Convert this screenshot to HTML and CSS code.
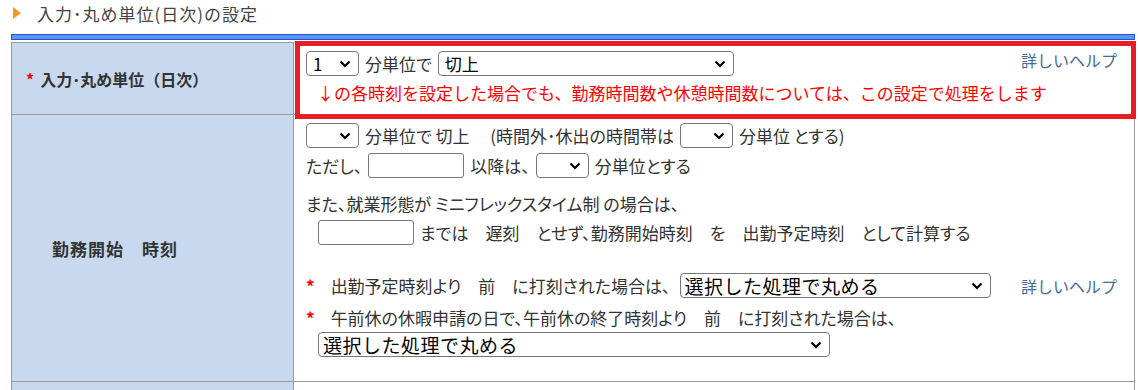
FILE: index.html
```html
<!DOCTYPE html>
<html lang="ja">
<head>
    <meta charset="UTF-8">
    <title>入力･丸め単位(日次)の設定</title>
    <link rel="stylesheet" href="styles.css">
</head>
<body>
    <div class="section-title">
        <span class="arrow"></span>
        <span>入力･丸め単位(日次)の設定</span>
    </div>
    <div class="section-bar"></div>

    <table class="setting-table">
        <tr class="row-unit">
            <th class="label"><span class="req">*</span>入力･丸め単位（日次）</th>
            <td class="body highlight">
                <a class="help" href="#">詳しいヘルプ</a>
                <div class="line">
                    <select class="sel-small"><option>1</option></select>
                    <span class="txt">分単位で</span>
                    <select class="sel-round"><option>切上</option></select>
                </div>
                <div class="notice">↓の各時刻を設定した場合でも、勤務時間数や休憩時間数については、この設定で処理をします</div>
            </td>
        </tr>
        <tr class="row-start">
            <th class="label"><span class="indent">勤務開始　時刻</span></th>
            <td class="body">
                <div class="line">
                    <select class="sel-small"><option></option></select>
                    <span class="txt">分単位で 切上　 (時間外･休出の時間帯は</span>
                    <select class="sel-small"><option></option></select>
                    <span class="txt">分単位 とする)</span>
                </div>
                <div class="line line-gap">
                    <span class="txt">ただし、</span>
                    <input class="time-input" type="text">
                    <span class="txt">以降は、</span>
                    <select class="sel-small"><option></option></select>
                    <span class="txt">分単位とする</span>
                </div>
                <div class="text-line flex-note">また、就業形態が ミニフレックスタイム制 の場合は、</div>
                <div class="line line-indent">
                    <input class="time-input" type="text">
                    <span class="txt">までは　遅刻　とせず、勤務開始時刻　を　出勤予定時刻　として計算する</span>
                </div>
                <div class="line line-early">
                    <span class="req">*</span>
                    <span class="txt">出勤予定時刻より　前　に打刻された場合は、</span>
                    <select class="sel-proc"><option>選択した処理で丸める</option></select>
                    <a class="help help-inline" href="#">詳しいヘルプ</a>
                </div>
                <div class="text-line am-note"><span class="req">*</span>午前休の休暇申請の日で、午前休の終了時刻より　前　に打刻された場合は、</div>
                <div class="line line-indent line-last">
                    <select class="sel-proc sel-wide"><option>選択した処理で丸める</option></select>
                </div>
            </td>
        </tr>
        <tr class="row-next">
            <th class="label"></th>
            <td class="body"></td>
        </tr>
    </table>
</body>
</html>
```

FILE: styles.css
```css
body {
    margin: 0;
    font-family: "Noto Sans CJK JP", "Noto Sans", sans-serif;
    font-size: 17px;
    color: #333;
    background-color: #fff;
}
.section-title {
    display: flex;
    align-items: center;
    height: 26px;
    padding-left: 13px;
    font-size: 17px;
    letter-spacing: 1px;
    color: #444;
}
.arrow {
    width: 0;
    height: 0;
    border-top: 6px solid transparent;
    border-bottom: 6px solid transparent;
    border-left: 8px solid #f39a1e;
    margin-right: 16px;
}
.section-bar {
    margin: 8px 3px 0 11px;
    height: 4px;
    background-color: #5e93f2;
    border: 1px solid #1b59d4;
}
.setting-table {
    margin: 2px 0 0 11px;
    width: 1124px;
    border-collapse: collapse;
}
.label {
    width: 267px;
    padding: 0 0 0 14px;
    background-color: #c8d9ef;
    border: 1px solid #9a9a9a;
    text-align: left;
    font-weight: bold;
    font-size: 16px;
    color: #333;
    vertical-align: middle;
}
.label .req {
    margin-right: 6px;
}
.indent {
    padding-left: 26px;
    font-size: 17px;
    letter-spacing: 1px;
}
.req {
    color: #f00;
    font-weight: bold;
}
.body {
    border: 1px solid #9a9a9a;
    padding: 8px 17px 0 12px;
    vertical-align: top;
}
.highlight {
    position: relative;
}
.highlight::after {
    content: "";
    position: absolute;
    top: -2px;
    left: 1px;
    right: -2px;
    bottom: -5px;
    border: 5px solid #e81e25;
    pointer-events: none;
}
.row-unit {
    height: 72px;
}
.row-start {
    height: 267px;
}
.row-next {
    height: 10px;
}
.help {
    float: right;
    color: #44699a;
    text-decoration: none;
    font-size: 16px;
    line-height: 18px;
}
.line {
    display: flex;
    align-items: center;
    gap: 6px;
    height: 25px;
}
.txt,
.text-line {
    white-space: pre;
    font-feature-settings: "palt";
}
select {
    appearance: none;
    -webkit-appearance: none;
    height: 25px;
    font-family: "Noto Sans CJK JP", sans-serif;
    font-size: 17px;
    color: #000;
    border: 1px solid #767676;
    border-radius: 4px;
    background-color: #fff;
    background-image: url("data:image/svg+xml,%3Csvg xmlns='http://www.w3.org/2000/svg' width='12' height='8' viewBox='0 0 12 8'%3E%3Cpath d='M1.5 1.5 L6 6 L10.5 1.5' fill='none' stroke='%23000' stroke-width='2.2'/%3E%3C/svg%3E");
    background-repeat: no-repeat;
    background-position: right 7px center;
    padding: 0 24px 0 6px;
    line-height: 23px;
}
.sel-small {
    width: 53px;
}
.sel-round {
    width: 296px;
}
.sel-proc {
    width: 311px;
    font-size: 19px;
    letter-spacing: 0.5px;
    padding-left: 4px;
}
.sel-wide {
    width: 512px;
}
.time-input {
    width: 96px;
    height: 25px;
    box-sizing: border-box;
    border: 1px solid #767676;
    border-radius: 3px;
    margin: 0;
}
.notice {
    margin-top: 4px;
    padding-left: 11px;
    color: #f00;
}
.line-gap {
    margin-top: 5px;
}
.text-line {
    line-height: 22px;
}
.flex-note {
    margin-top: 15px;
}
.line-indent {
    margin-top: 5px;
    padding-left: 12px;
}
.line-early {
    margin-top: 28px;
}
.line-early .req {
    margin-right: 10px;
}
.line-early .sel-proc {
    margin-left: 3px;
}
.am-note {
    margin-top: 9px;
}
.line-last {
    margin-top: 3px;
}
.text-line .req {
    margin-right: 16px;
}
.help-inline {
    float: none;
    margin-left: auto;
}
```
